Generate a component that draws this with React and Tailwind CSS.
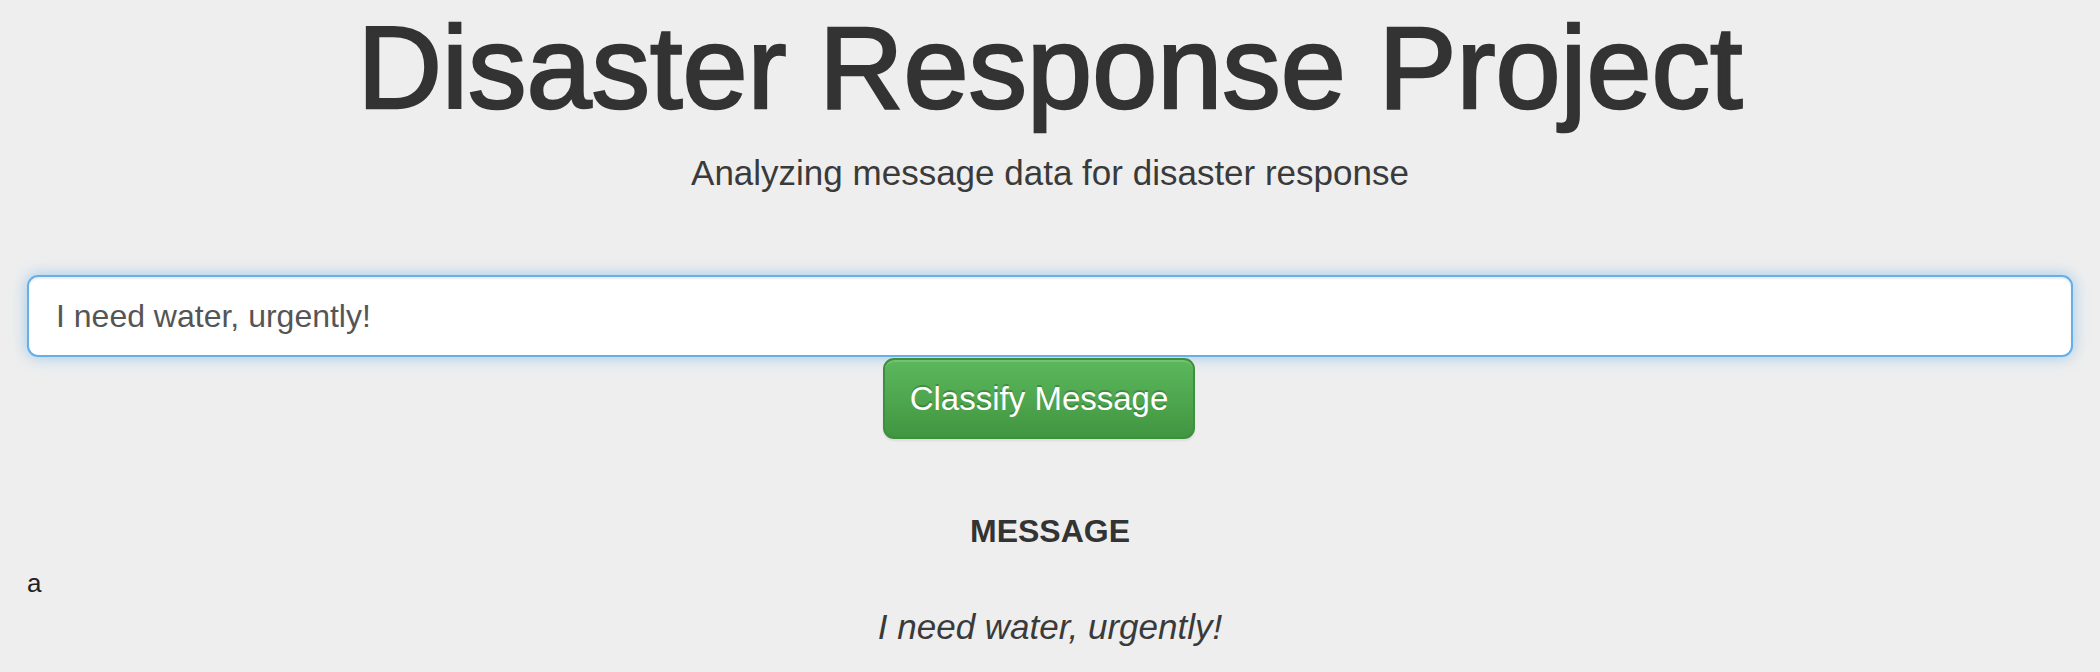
export default function App() {
  return (
    <div className="min-h-screen w-full bg-[#eeeeee] text-[#333333] font-['Liberation_Sans',Arial,sans-serif]">
      <div className="px-[27px]">
        <h1 className="pt-[4px] text-center text-[117px] leading-[128px] font-normal [-webkit-text-stroke:2.5px_#333333]">
          Disaster Response Project
        </h1>
        <p className="mt-[16px] text-center text-[35px] leading-[50px] font-light text-[#3a3a3a]">
          Analyzing message data for disaster response
        </p>

        <form className="mt-[77px]" onSubmit={(e) => e.preventDefault()}>
          <input
            type="text"
            defaultValue="I need water, urgently!"
            className="block w-full h-[82px] rounded-[11px] border-2 border-[#66afe9] bg-white px-[27px] text-[32px] text-[#555555] outline-none shadow-[inset_0_2px_2px_rgba(0,0,0,0.075),0_0_15px_rgba(102,175,233,0.6)]"
          />
          <div className="mt-[1px] flex justify-center">
            <button
              type="submit"
              className="mr-[22px] h-[81px] w-[312px] rounded-[11px] border-2 border-[#3e8f3e] bg-gradient-to-b from-[#5cb85c] to-[#419641] text-[33px] text-white [text-shadow:0_-2px_0_rgba(0,0,0,0.2)] shadow-[inset_0_2px_0_rgba(255,255,255,0.15),0_2px_2px_rgba(0,0,0,0.075)]"
            >
              Classify Message
            </button>
          </div>
        </form>

        <h4 className="mt-[74px] text-center text-[32px] leading-[36px] font-bold">MESSAGE</h4>
        <div className="mt-[19px] text-[26px] leading-[30px] text-[#222]">a</div>
        <p className="mt-[9px] text-center text-[35px] leading-[40px] italic font-light text-[#3a3a3a]">
          I need water, urgently!
        </p>
      </div>
    </div>
  );
}
